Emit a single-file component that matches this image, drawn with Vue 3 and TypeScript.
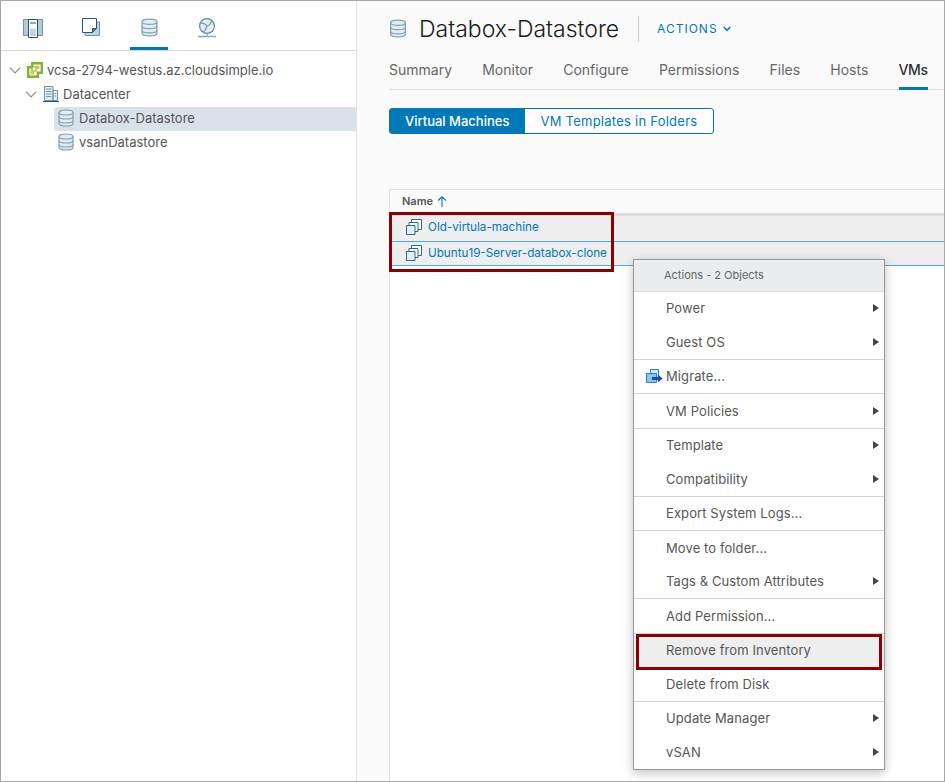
<script setup lang="ts">
type TreeRow = { label: string; icon: string; depth: number; open?: boolean; selected?: boolean };
type MenuItem = { label: string; sub?: boolean; migrate?: boolean; marked?: boolean };

const tree: TreeRow[] = [
  { label: 'vcsa-2794-westus.az.cloudsimple.io', icon: 'vc', depth: 0, open: true },
  { label: 'Datacenter', icon: 'dc', depth: 1, open: true },
  { label: 'Databox-Datastore', icon: 'db', depth: 2, selected: true },
  { label: 'vsanDatastore', icon: 'db', depth: 2 },
];

const tabs = ['Summary', 'Monitor', 'Configure', 'Permissions', 'Files', 'Hosts', 'VMs'];
const vms = ['Old-virtula-machine', 'Ubuntu19-Server-databox-clone'];

const menu: MenuItem[][] = [
  [{ label: 'Power', sub: true }, { label: 'Guest OS', sub: true }],
  [{ label: 'Migrate...', migrate: true }],
  [{ label: 'VM Policies', sub: true }],
  [{ label: 'Template', sub: true }, { label: 'Compatibility', sub: true }],
  [{ label: 'Export System Logs...' }],
  [{ label: 'Move to folder...' }, { label: 'Tags & Custom Attributes', sub: true }],
  [{ label: 'Add Permission...' }],
  [{ label: 'Remove from Inventory', marked: true }, { label: 'Delete from Disk' }],
  [{ label: 'Update Manager', sub: true }, { label: 'vSAN', sub: true }],
];
</script>

<template>
  <div class="page">
    <svg width="0" height="0" class="defs">
      <defs>
        <symbol id="db" viewBox="0 0 16 18">
          <path d="M1 3.500C1 1.800 4.200 1 8 1s7 .8 7 2.500v11c0 1.700-3.200 2.500-7 2.500s-7-.8-7-2.500z" fill="#e3ecf1" stroke="#7fa3b5" stroke-width="1.200" />
          <path d="M1 3.500C1 5.200 4.200 6 8 6s7-.8 7-2.500M1 7.500C1 9.200 4.200 10 8 10s7-.8 7-2.500M1 11.500C1 13.200 4.200 14 8 14s7-.8 7-2.500" fill="none" stroke="#7fa3b5" stroke-width="1.200" />
        </symbol>
      </defs>
    </svg>

    <aside class="sidebar">
      <div class="nav-icons">
        <div class="nav-icon">
          <svg width="20" height="20" viewBox="0 0 20 20">
            <path d="M.5 1.500h19v16H.5z" fill="#b5cad6" stroke="#6d94a8" />
            <path d="M5.500 1.500h9v18h-9z" fill="#fff" stroke="#1d5872" />
            <path d="M7 10.500h6v7.500H7z" fill="#c3d3dc" />
            <path d="M7 5h6" stroke="#1d5872" />
          </svg>
        </div>
        <div class="nav-icon">
          <svg width="18" height="18" viewBox="0 0 18 18">
            <path d="M3 4h14.500v13.500H3z" fill="#c3d3dc" stroke="#6d94a8" />
            <path d="M.5.500h14v10l-4 4h-10z" fill="#fff" stroke="#1d5872" />
            <path d="M10.500 14.500v-4h4z" fill="#6d94a8" stroke="#1d5872" />
          </svg>
        </div>
        <div class="nav-icon active">
          <svg width="17" height="19"><use href="#db" /></svg>
        </div>
        <div class="nav-icon">
          <svg width="18" height="20" viewBox="0 0 18 20">
            <circle cx="9" cy="8" r="7.400" fill="#e3ecf1" stroke="#5f8ba1" stroke-width="1.200" />
            <path d="M2.500 5c3 0 5.500 1 6.500 3.500 2-1 4-3 5-5.500M9 8.500c-1 2.500-2.500 4.500-4 6" fill="none" stroke="#7fa3b5" stroke-width="1.300" />
            <path d="M9 15.500v2.500" stroke="#6d94a8" />
            <path d="M0 18.500h18" stroke="#8fabba" stroke-width="1.600" />
          </svg>
        </div>
      </div>

      <ul class="tree">
        <li
          v-for="row in tree"
          :key="row.label"
          class="tree-row"
          :class="['depth-' + row.depth, { selected: row.selected }]"
        >
          <svg v-if="row.open" class="chevron" width="12" height="7" viewBox="0 0 12 7">
            <path d="M.7.700L6 6l5.300-5.300" fill="none" stroke="#8c8c8c" stroke-width="1.200" />
          </svg>
          <svg v-if="row.icon === 'vc'" class="tree-icon" width="16" height="16" viewBox="0 0 16 16">
            <path d="M5.200 1.200h9.600v9.600h-4v4H1.200V5.200h4z" fill="#fff" stroke="#7cb82f" stroke-width="2.400" />
            <path d="M5 5h4v4H5z" fill="#fff" stroke="#7cb82f" stroke-width="1.200" />
            <path d="M9 3.500h3.500V7H9zM3.500 9H7v3.500H3.500z" fill="#f6b73c" />
          </svg>
          <svg v-else-if="row.icon === 'dc'" class="tree-icon" width="16" height="16" viewBox="0 0 16 16">
            <path d="M1.500 .5h8.500v14H1.500zM10 4.500h4.500v10H10z" fill="#e6eef3" stroke="#6d94a8" />
            <path d="M3 3h5.500M3 5.500h5.500M3 8h5.500M3 10.500h5.500M11.500 7.500h1.500M11.500 10h1.500" stroke="#6d94a8" />
            <path d="M0 15.500h16" stroke="#1d5872" />
          </svg>
          <svg v-else class="tree-icon" width="16" height="18"><use href="#db" /></svg>
          <span>{{ row.label }}</span>
        </li>
      </ul>
    </aside>

    <main class="main">
      <header class="title-row">
        <svg width="18" height="19"><use href="#db" /></svg>
        <h1>Databox-Datastore</h1>
        <span class="actions">
          ACTIONS
          <svg width="8" height="6" viewBox="0 0 8 6">
            <path d="M.8 1L4 4.300 7.200 1" fill="none" stroke="#0079b8" stroke-width="1.500" />
          </svg>
        </span>
      </header>

      <nav class="tabs">
        <span v-for="tab in tabs" :key="tab" class="tab" :class="{ active: tab === 'VMs' }">{{ tab }}</span>
      </nav>

      <div class="segments">
        <span class="segment on">Virtual Machines</span>
        <span class="segment">VM Templates in Folders</span>
      </div>

      <section class="grid">
        <div class="grid-head">
          Name
          <svg width="10" height="11" viewBox="0 0 10 11">
            <path d="M5 11V1M1 4.500L5 .8l4 3.700" fill="none" stroke="#0079b8" stroke-width="1.100" />
          </svg>
        </div>
        <div v-for="vm in vms" :key="vm" class="grid-row">
          <svg width="16" height="16" viewBox="0 0 16 16">
            <path d="M5.500.5h10v10h-10z" fill="#fff" stroke="#2a6a88" />
            <path d="M3 3.500h9v9H3z" fill="#fff" stroke="#2a6a88" />
            <path d="M.5 6.500h8.500v9H.5z" fill="#e3edf3" stroke="#2a6a88" />
          </svg>
          <a>{{ vm }}</a>
        </div>
      </section>
    </main>

    <div class="mark mark-rows"></div>

    <div class="menu">
      <div class="menu-title">Actions - 2 Objects</div>
      <div v-for="(group, i) in menu" :key="i" class="menu-group">
        <div v-for="item in group" :key="item.label" class="menu-item" :class="{ marked: item.marked }">
          <svg v-if="item.migrate" class="migrate" width="17" height="15" viewBox="0 0 17 15">
            <path d="M4.500.5h8v8h-8z" fill="#cfe6f7" stroke="#2f7fc4" />
            <path d="M.5 4.500h10v9H.5z" fill="#8cc4ee" stroke="#2f7fc4" />
            <path d="M6 8h6V5.500L16.500 9.500 12 13.500V11H6z" fill="#1c4f9c" />
          </svg>
          <span>{{ item.label }}</span>
          <i v-if="item.sub" class="caret"></i>
        </div>
      </div>
    </div>
  </div>
</template>

<style scoped>
.page {
  position: relative;
  display: flex;
  box-sizing: border-box;
  width: 945px;
  height: 782px;
  overflow: hidden;
  border: 1px solid #a6a6a6;
  background: #fff;
  color: #565656;
  font-family: Inter, "Liberation Sans", sans-serif;
  font-size: 13px;
}

.defs {
  position: absolute;
}

.sidebar {
  flex: none;
  width: 355px;
  border-right: 1px solid #e4e4e4;
  background: #fff;
}

.nav-icons {
  display: flex;
  height: 49px;
  border-bottom: 1px solid #d7d7d7;
  padding-left: 13px;
}

.nav-icon {
  display: flex;
  justify-content: center;
  box-sizing: border-box;
  width: 38px;
  height: 49px;
  margin-right: 20px;
  padding-top: 17px;
}

.nav-icon.active {
  border-bottom: 3px solid #0079b8;
}

.tree {
  margin: 8px 0 0;
  padding: 0;
  list-style: none;
}

.tree-row {
  display: flex;
  align-items: center;
  box-sizing: border-box;
  height: 24px;
  padding-bottom: 2px;
  white-space: nowrap;
}

.chevron {
  flex: none;
  margin-right: 6px;
}

.tree-icon {
  flex: none;
  margin-right: 4px;
}

.depth-0 {
  padding-left: 8px;
}

.depth-1 {
  padding-left: 24px;
}

.depth-2 {
  margin-left: 53px;
  padding-left: 4px;
  border-radius: 3px 0 0 3px;
}

.depth-2 .tree-icon {
  margin-right: 5px;
}

.selected {
  background: #d8e3e9;
}

.main {
  flex: 1;
  min-width: 0;
  padding-left: 32px;
  background: #fafafa;
}

.title-row {
  display: flex;
  align-items: center;
  height: 55px;
}

.title-row h1 {
  margin: 0 19px 0 12px;
  color: #1a1a1a;
  font-size: 23px;
  font-weight: 300;
}

.actions {
  display: flex;
  align-items: center;
  gap: 5px;
  height: 26px;
  border-left: 1px solid #ccc;
  padding-left: 18px;
  color: #0079b8;
  font-size: 12px;
  letter-spacing: 1px;
}

.tabs {
  display: flex;
  gap: 30.2px;
  height: 33px;
  border-bottom: 1px solid #ddd;
}

.tab {
  box-sizing: border-box;
  height: 34px;
  padding-top: 5px;
  color: #666;
  font-size: 14px;
  white-space: nowrap;
}

.tab.active {
  border-bottom: 3px solid #0079b8;
  color: #333;
  font-weight: 500;
  letter-spacing: -0.4px;
}

.segments {
  display: inline-flex;
  margin-top: 18px;
  height: 26px;
  box-sizing: border-box;
  border: 1px solid #0079b8;
  border-radius: 3px;
  background: #fff;
  font-size: 13px;
  vertical-align: top;
}

.segment {
  display: flex;
  align-items: center;
  padding: 0 16px 0 15px;
  color: #0079b8;
  letter-spacing: 0.25px;
  white-space: nowrap;
}

.segment.on {
  background: #0079b8;
  color: #fff;
  font-weight: 500;
  letter-spacing: 0;
}

.grid {
  height: 600px;
  margin-top: 55px;
  border-top: 1px solid #ddd;
  border-left: 1px solid #ddd;
  background: #fff;
}

.grid-head {
  display: flex;
  align-items: center;
  gap: 4px;
  box-sizing: border-box;
  height: 26px;
  border-bottom: 3px solid #ddd;
  padding-bottom: 1px;
  padding-left: 12px;
  background: #fafafa;
  color: #565656;
  font-size: 11px;
  font-weight: 600;
}

.grid-row {
  display: flex;
  align-items: center;
  gap: 6px;
  box-sizing: border-box;
  height: 26px;
  border-bottom: 1px solid #49afd9;
  padding-bottom: 4px;
  padding-left: 16px;
  background: #eee;
}

.grid-row + .grid-row {
  height: 24px;
  padding-bottom: 2px;
}

.grid-row a {
  color: #0079b8;
  font-size: 11.7px;
  white-space: nowrap;
}

.mark {
  position: absolute;
  box-sizing: border-box;
  border: 3px solid #8b0000;
}

.mark-rows {
  top: 211px;
  left: 388px;
  width: 225px;
  height: 60px;
}

.menu {
  position: absolute;
  top: 258px;
  left: 632px;
  box-sizing: border-box;
  width: 252px;
  border: 1px solid #999;
  background: #fff;
  box-shadow: 0 3px 10px rgba(0, 0, 0, 0.25);
}

.menu-title {
  display: flex;
  align-items: center;
  box-sizing: border-box;
  height: 31.7px;
  border-bottom: 1px solid #ddd;
  padding-left: 30px;
  background: #eaecee;
  color: #666;
  font-size: 11px;
}

.menu-group {
  border-bottom: 1px solid #d4d4d4;
}

.menu-group:last-child {
  border-bottom: 0;
}

.menu-item {
  position: relative;
  display: flex;
  align-items: center;
  height: 33.5px;
  padding-left: 32px;
  color: #565656;
  font-size: 13px;
  letter-spacing: 0.1px;
}

.menu-item.marked {
  background: #eee;
}

.menu-item.marked::after {
  content: "";
  position: absolute;
  top: 0;
  right: 2px;
  bottom: -3px;
  left: 2px;
  border: 3px solid #8b0000;
}

.migrate {
  position: absolute;
  left: 12px;
  top: 9px;
}

.caret {
  position: absolute;
  top: 50%;
  right: 5px;
  margin-top: -4px;
  border-top: 4px solid transparent;
  border-bottom: 4px solid transparent;
  border-left: 6px solid #444;
}
</style>

<style>
html,
body {
  margin: 0;
}
</style>
